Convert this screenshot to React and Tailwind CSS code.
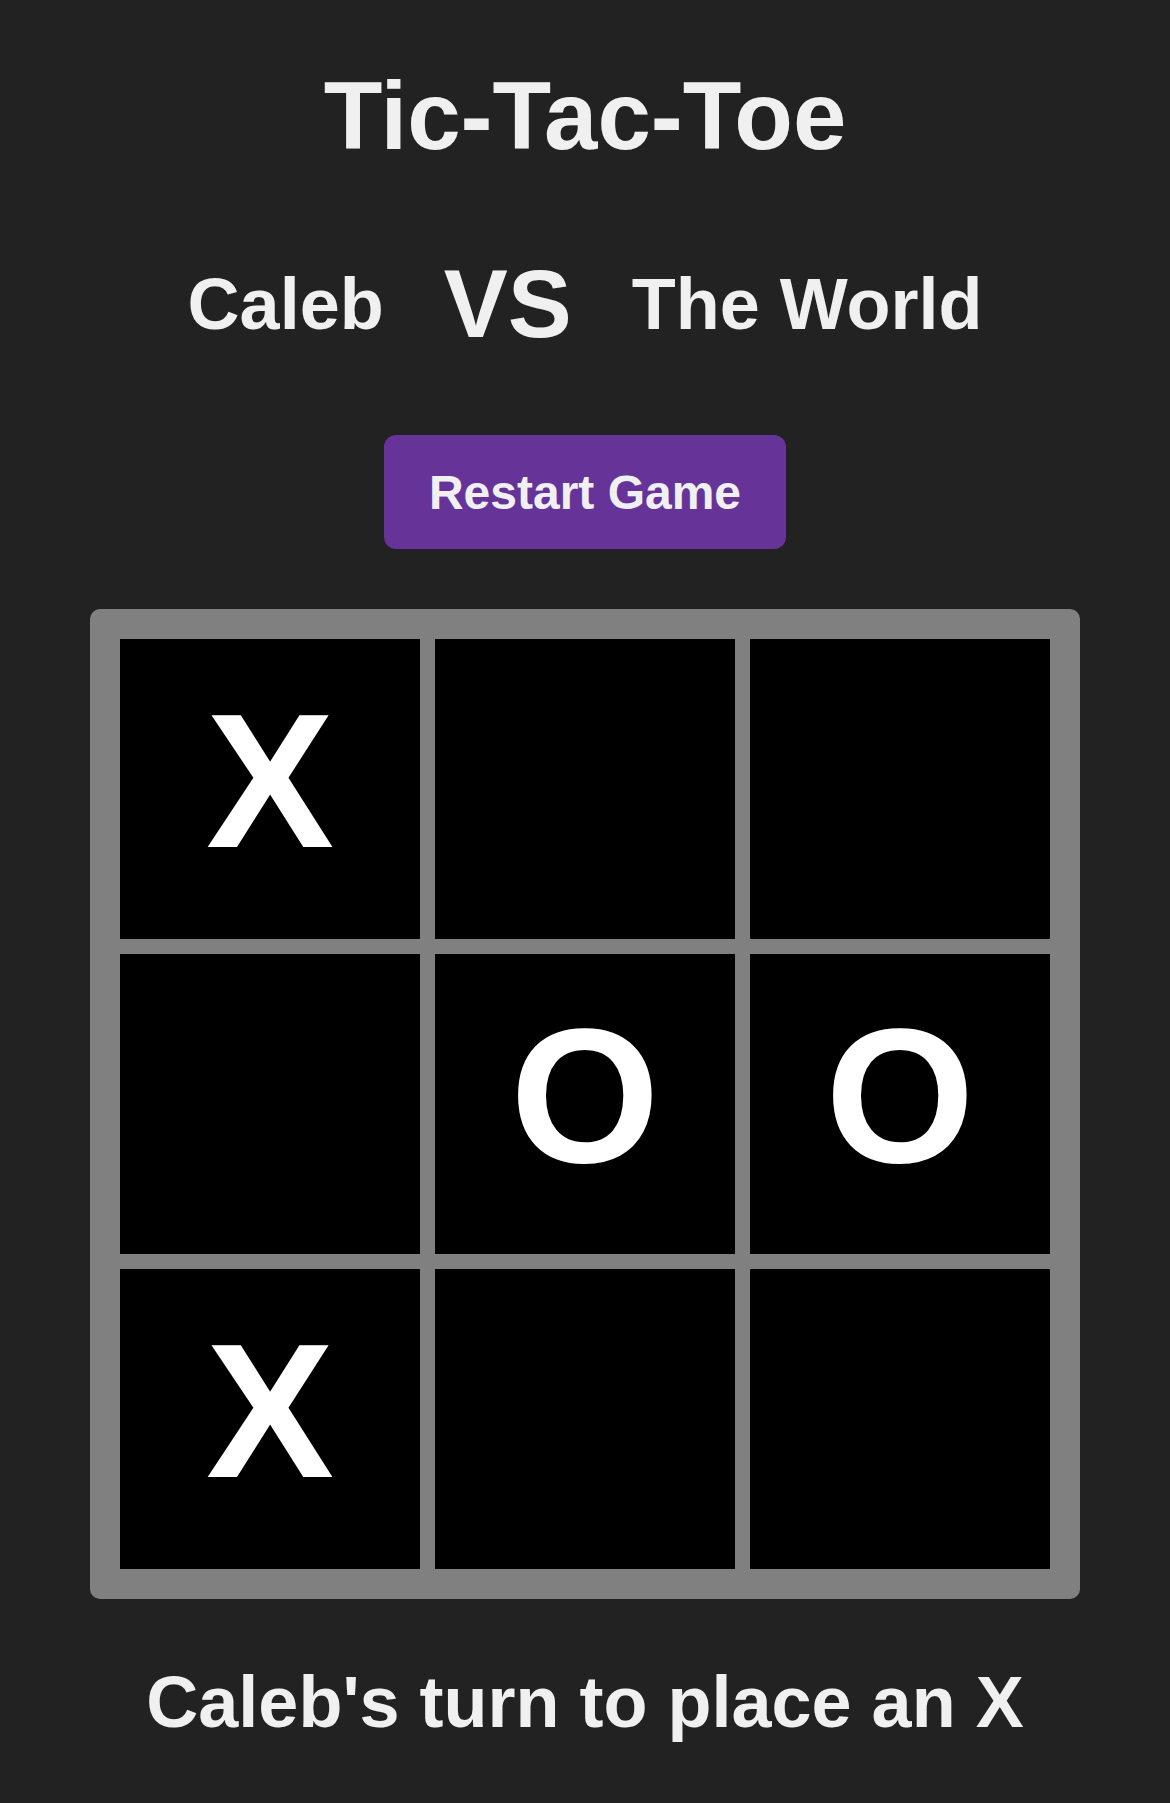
import { useState } from "react";

const startBoard = ["X", "", "", "", "O", "O", "X", "", ""];

const Cell = ({ value, onClick }) => {
  return (
    <button
      onClick={onClick}
      className="flex items-center justify-center bg-black w-[300px] h-[300px] pb-[18px] text-white text-[192px] font-bold leading-[normal] cursor-pointer"
    >
      {value}
    </button>
  );
};

const App = () => {
  const [board, setBoard] = useState(startBoard);
  const [turn, setTurn] = useState("X");

  const players = { X: "Caleb", O: "The World" };

  const handleClick = (i) => {
    if (board[i]) return;
    const next = [...board];
    next[i] = turn;
    setBoard(next);
    setTurn(turn === "X" ? "O" : "X");
  };

  const restart = () => {
    setBoard(Array(9).fill(""));
    setTurn("X");
  };

  return (
    <div className="min-h-screen bg-[#222222] text-[#f0f0f0] font-['Liberation_Sans',Arial,sans-serif] font-bold flex flex-col items-center">
      <h1 className="mt-[61px] text-[96px] leading-[normal]">Tic-Tac-Toe</h1>

      <div className="mt-[78px] flex items-center gap-[60px]">
        <h2 className="text-[72px] leading-[normal]">{players.X}</h2>
        <span className="text-[96px] leading-[normal]">VS</span>
        <h2 className="text-[72px] leading-[normal]">{players.O}</h2>
      </div>

      <button
        onClick={restart}
        className="mt-[76px] bg-[#663399] rounded-xl px-[45px] py-[29.5px] text-[48px] leading-[normal] text-[#f0f0f0] cursor-pointer"
      >
        Restart Game
      </button>

      <div className="mt-[60px] bg-[#808080] rounded-[10px] p-[30px] grid grid-cols-3 gap-[15px]">
        {board.map((value, i) => (
          <Cell key={i} value={value} onClick={() => handleClick(i)} />
        ))}
      </div>

      <p className="mt-[62px] text-[72px] leading-[normal]">
        {players[turn] === "Caleb" ? "Caleb's" : "The World's"} turn to place an {turn}
      </p>
    </div>
  );
};

export default App;
